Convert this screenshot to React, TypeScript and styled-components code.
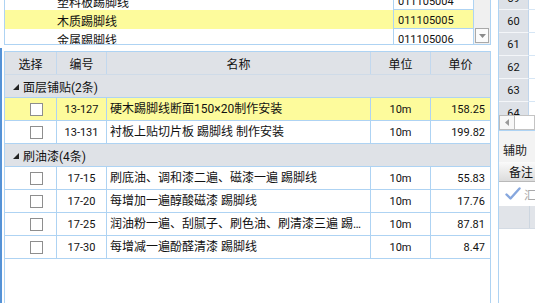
import React from 'react';
import styled, { createGlobalStyle } from 'styled-components';

const LINE = '#aed3f3';
const HEAD_BG = '#dfe2e7';
const PICK_BG = '#fdfb9c';

const GlobalStyle = createGlobalStyle`
  html, body {
    margin: 0;
    padding: 0;
    background: #ffffff;
    overflow: hidden;
  }
  body {
    font-family: Roboto, "Noto Sans CJK SC", sans-serif;
    font-size: 12px;
    color: #111;
  }
`;

const pickItems = [
  { name: '塑料板踢脚线', code: '011105004' },
  { name: '木质踢脚线', code: '011105005', active: true },
  { name: '金属踢脚线', code: '011105006' }
];

const groups = [
  {
    title: '面层铺贴(2条)',
    rows: [
      { code: '13-127', name: '硬木踢脚线断面150×20制作安装', unit: '10m', price: '158.25', active: true },
      { code: '13-131', name: '衬板上贴切片板 踢脚线 制作安装', unit: '10m', price: '199.82' }
    ]
  },
  {
    title: '刷油漆(4条)',
    rows: [
      { code: '17-15', name: '刷底油、调和漆二遍、磁漆一遍 踢脚线', unit: '10m', price: '55.83' },
      { code: '17-20', name: '每增加一遍醇酸磁漆 踢脚线', unit: '10m', price: '17.76' },
      { code: '17-25', name: '润油粉一遍、刮腻子、刷色油、刷清漆三遍 踢脚线', unit: '10m', price: '87.81' },
      { code: '17-30', name: '每增减一遍酚醛清漆 踢脚线', unit: '10m', price: '8.47' }
    ]
  }
];

const rowNumbers = [59, 60, 61, 62, 63, 64];

const App = () => {
  return (
    <>
      <GlobalStyle />
      <Screen>
        <LeftPane>
          <PickList>
            <PickBody>
              {pickItems.map((item) => (
                <PickRow key={item.code} $active={item.active}>
                  <PickName>{item.name}</PickName>
                  <PickCode>{item.code}</PickCode>
                </PickRow>
              ))}
            </PickBody>
            <PickScroll>
              <ArrowButton>
                <svg width="7" height="4" viewBox="0 0 7 4">
                  <path d="M0 0 L7 0 L3.5 4 Z" fill="#8a8a8a" />
                </svg>
              </ArrowButton>
            </PickScroll>
          </PickList>

          <QuotaPanel>
            <QuotaGrid>
              <HeaderRow>
                <HeadCell>选择</HeadCell>
                <HeadCell>编号</HeadCell>
                <HeadCell>名称</HeadCell>
                <HeadCell>单位</HeadCell>
                <HeadCell $last>单价</HeadCell>
              </HeaderRow>
              {groups.map((group) => (
                <React.Fragment key={group.title}>
                  <GroupRow>
                    <Expander />
                    {group.title}
                  </GroupRow>
                  {group.rows.map((row) => (
                    <DataRow key={row.code} $active={row.active}>
                      <CheckCell>
                        <CheckBox />
                      </CheckCell>
                      <Cell $align="center">
                        <Num>{row.code}</Num>
                      </Cell>
                      <NameCell>{row.name}</NameCell>
                      <Cell $align="center">
                        <Num>{row.unit}</Num>
                      </Cell>
                      <Cell $align="right" $last>
                        <Num>{row.price}</Num>
                      </Cell>
                    </DataRow>
                  ))}
                </React.Fragment>
              ))}
            </QuotaGrid>
          </QuotaPanel>
        </LeftPane>

        <SidePane>
          <SheetArea>
            <SheetRows>
              {rowNumbers.map((n) => (
                <SheetRow key={n}>
                  <RowNum>{n}</RowNum>
                  <SheetCell />
                </SheetRow>
              ))}
            </SheetRows>
          </SheetArea>
          <HScroll>
            <ScrollButton>
              <svg width="4" height="7" viewBox="0 0 4 7">
                <path d="M4 0 L4 7 L0 3.5 Z" fill="#9a9a9a" />
              </svg>
            </ScrollButton>
            <ScrollThumb />
          </HScroll>
          <TabLabel>辅助</TabLabel>
          <NoteGrid>
            <NoteHead>备注</NoteHead>
            <NoteRow>
              <CheckMark width="16" height="14" viewBox="0 0 16 14">
                <path
                  d="M1.5 7.5 L5.5 11.5 L14.5 1.5"
                  fill="none"
                  stroke="#86a7de"
                  strokeWidth="2.4"
                  strokeLinecap="round"
                  strokeLinejoin="round"
                />
              </CheckMark>
              <NoteText>汇总</NoteText>
            </NoteRow>
            <NoteGray>
              <NoteGrayCell />
            </NoteGray>
          </NoteGrid>
        </SidePane>
      </Screen>
    </>
  );
};

const Screen = styled.div`
  display: flex;
  width: 535px;
  height: 303px;
  background: #ffffff;
  overflow: hidden;
`;

const LeftPane = styled.div`
  display: flex;
  flex-direction: column;
  width: 498px;
  flex-shrink: 0;
`;

const PickList = styled.div`
  display: flex;
  box-sizing: border-box;
  width: 487px;
  height: 45px;
  margin-left: 4px;
  border: 1px solid ${LINE};
  border-top: none;
  overflow: hidden;
`;

const PickBody = styled.div`
  flex: 1;
  margin-top: -9px;
`;

const PickRow = styled.div<{ $active?: boolean }>`
  display: grid;
  grid-template-columns: 388px 1fr;
  height: 19px;
  background: ${(p) => (p.$active ? PICK_BG : '#ffffff')};
`;

const PickName = styled.div`
  display: flex;
  align-items: center;
  padding: 2px 0 0 52px;
  font-size: 12px;
`;

const PickCode = styled.div`
  display: flex;
  align-items: center;
  box-sizing: border-box;
  padding: 2px 0 0 4px;
  border-left: 1px solid ${LINE};
  border-bottom: 1px solid ${LINE};
  font-size: 11px;
`;

const PickScroll = styled.div`
  display: flex;
  align-items: flex-end;
  justify-content: center;
  box-sizing: border-box;
  width: 17px;
  padding-bottom: 1px;
  border-left: 1px solid ${LINE};
  background: #f0f0f0;
`;

const ArrowButton = styled.div`
  display: flex;
  align-items: center;
  justify-content: center;
  box-sizing: border-box;
  width: 14px;
  height: 15px;
  background: #fbfbfb;
  border: 1px solid #a9a9a9;
`;

const QuotaPanel = styled.div`
  flex: 1;
  display: flex;
  margin-top: 3px;
  padding: 3px 0 0 2px;
  border-left: 2px solid #5592d6;
`;

const QuotaGrid = styled.div`
  box-sizing: border-box;
  width: 487px;
  border: 1px solid ${LINE};
  border-bottom: none;
  background: #ffffff;
`;

const COLUMNS = '52px 50px 264px 60px 1fr';

const HeaderRow = styled.div`
  display: grid;
  grid-template-columns: ${COLUMNS};
  box-sizing: border-box;
  height: 23px;
  background: ${HEAD_BG};
  border-bottom: 1px solid #cfdbe8;
`;

const HeadCell = styled.div<{ $last?: boolean }>`
  display: flex;
  align-items: center;
  justify-content: center;
  border-right: ${(p) => (p.$last ? 'none' : '1px solid #c2d8ee')};
`;

const GroupRow = styled.div`
  display: flex;
  align-items: center;
  box-sizing: border-box;
  height: 23px;
  padding-left: 8px;
  background: ${HEAD_BG};
  border-bottom: 1px solid ${LINE};
`;

const Expander = styled.span`
  width: 0;
  height: 0;
  margin-right: 4px;
  margin-top: 1px;
  border-left: 6px solid transparent;
  border-bottom: 6px solid #222;
`;

const DataRow = styled.div<{ $active?: boolean }>`
  display: grid;
  grid-template-columns: ${COLUMNS};
  box-sizing: border-box;
  height: 23px;
  background: ${(p) => (p.$active ? PICK_BG : '#ffffff')};
  border-bottom: 1px solid ${LINE};
`;

const Cell = styled.div<{ $align?: 'left' | 'center' | 'right'; $last?: boolean }>`
  display: flex;
  align-items: center;
  justify-content: ${(p) =>
    p.$align === 'center' ? 'center' : p.$align === 'right' ? 'flex-end' : 'flex-start'};
  padding: ${(p) => (p.$align === 'right' ? '0 5px 0 0' : '0')};
  border-right: ${(p) => (p.$last ? 'none' : `1px solid ${LINE}`)};
  min-width: 0;
`;

const CheckCell = styled(Cell)`
  padding-left: 25px;
`;

const NameCell = styled.div`
  box-sizing: border-box;
  padding: 0 3px;
  line-height: 22px;
  border-right: 1px solid ${LINE};
  white-space: nowrap;
  overflow: hidden;
  text-overflow: ellipsis;
  min-width: 0;
`;

const Num = styled.span`
  font-size: 11px;
`;

const CheckBox = styled.span`
  box-sizing: border-box;
  width: 13px;
  height: 13px;
  border: 1px solid #8e8e8e;
  background: #ffffff;
`;

const SidePane = styled.div`
  display: flex;
  flex-direction: column;
  flex: 1;
  border-left: 1px solid ${LINE};
  overflow: hidden;
`;

const SheetArea = styled.div`
  height: 115px;
  overflow: hidden;
`;

const SheetRows = styled.div`
  margin-top: -13px;
`;

const SheetRow = styled.div`
  display: flex;
  height: 23px;
`;

const RowNum = styled.div`
  display: flex;
  align-items: center;
  justify-content: center;
  box-sizing: border-box;
  width: 30px;
  flex-shrink: 0;
  background: #dde1e7;
  border-right: 1px solid #bfd5ec;
  border-bottom: 1px solid #f4f6f9;
  font-size: 11px;
`;

const SheetCell = styled.div`
  flex: 1;
  box-sizing: border-box;
  border-bottom: 1px solid #d6e6f5;
`;

const HScroll = styled.div`
  display: flex;
  box-sizing: border-box;
  height: 16px;
  background: #f0f0f0;
  border-bottom: 1px solid ${LINE};
`;

const ScrollButton = styled.div`
  display: flex;
  align-items: center;
  justify-content: center;
  box-sizing: border-box;
  width: 16px;
  height: 15px;
  background: #f7f7f7;
  border: 1px solid #bcbcbc;
`;

const ScrollThumb = styled.div`
  flex: 1;
  height: 15px;
  box-sizing: border-box;
  background: #ffffff;
  border: 1px solid #c4c4c4;
  border-left: none;
`;

const TabLabel = styled.div`
  display: flex;
  align-items: center;
  box-sizing: border-box;
  height: 31px;
  padding: 6px 0 0 4px;
  background: #f3f3f3;
  font-size: 12px;
  color: #222;
  white-space: nowrap;
`;

const NoteGrid = styled.div`
  flex: 1;
  background: #ffffff;
`;

const NoteHead = styled.div`
  display: flex;
  align-items: center;
  box-sizing: border-box;
  height: 20px;
  padding-left: 10px;
  background: linear-gradient(#fafafa, #dcdcdc);
  border-bottom: 1px solid #b9b9b9;
  white-space: nowrap;
`;

const NoteRow = styled.div`
  display: flex;
  align-items: center;
  gap: 3px;
  box-sizing: border-box;
  height: 24px;
  padding-left: 6px;
  white-space: nowrap;
`;

const CheckMark = styled.svg`
  flex-shrink: 0;
`;

const NoteText = styled.span`
  flex-shrink: 0;
  color: #a8a8a8;
`;

const NoteGray = styled.div`
  display: flex;
  box-sizing: border-box;
  height: 23px;
  padding-left: 30px;
  background: #e1e4e9;
  border-bottom: 1px solid #d4dbe4;
`;

const NoteGrayCell = styled.div`
  flex: 1;
  border-left: 1px solid #cdd6e0;
`;

export default App;
